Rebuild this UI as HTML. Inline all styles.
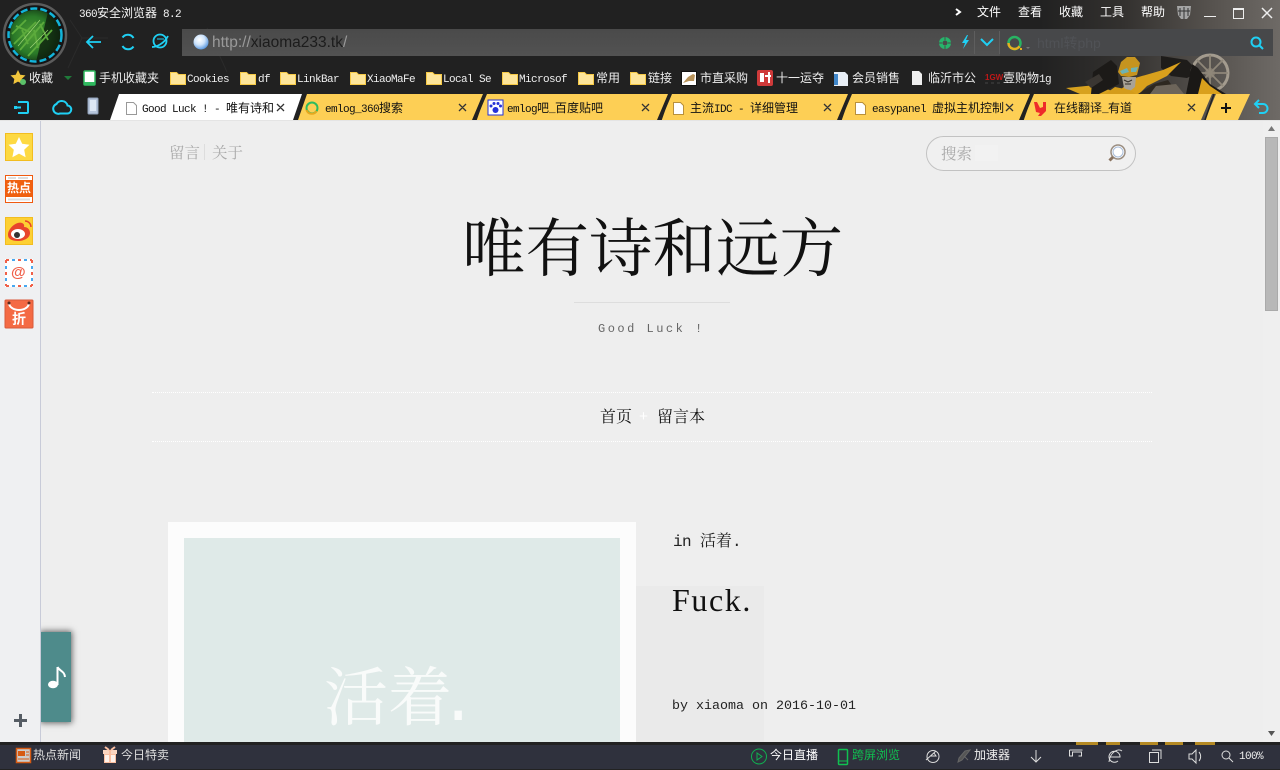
<!DOCTYPE html>
<html lang="zh"><head><meta charset="utf-8"><title>Good Luck</title>
<style>
*{margin:0;padding:0;box-sizing:border-box}
html,body{width:1280px;height:770px;overflow:hidden;background:#eee}
body{position:relative;font-family:"Liberation Mono","Noto Sans CJK SC",sans-serif}
.a{position:absolute}
.t{position:absolute;white-space:nowrap;line-height:1}
.c{font-family:"Noto Sans CJK SC","WenQuanYi Zen Hei",sans-serif;font-size:12px;color:#eee}
.c i,i.l{font:normal 11px "Liberation Mono",monospace;letter-spacing:-.6px}
.k{color:#111}
.s{font-family:"Liberation Mono","Noto Serif CJK SC",serif}
svg{position:absolute;left:0;top:0;display:block}
</style></head><body>

<!-- page content -->
<div class="a" style="left:41px;top:120px;width:1222px;height:622px;background:#eee"></div>
<div class="a" style="left:636px;top:586px;width:128px;height:156px;background:#eaeaea"></div>
<div class="a" style="left:168px;top:522px;width:468px;height:220px;background:#fcfcfc"></div>
<div class="a" style="left:184px;top:538px;width:436px;height:204px;background:#dfeae8"></div>
<div class="t s" style="left:324px;top:672px;font-size:64px;color:#f9fbfa">活着<span style="margin-left:-13px">.</span></div>

<div class="t s" style="left:169px;top:147px;font-size:15.5px;color:#aaa">留言</div>
<div class="a" style="left:204px;top:144px;width:1px;height:16px;background:#ddd"></div>
<div class="t s" style="left:212px;top:147px;font-size:15.5px;color:#aaa">关于</div>
<div class="a" style="left:926px;top:136px;width:210px;height:35px;border:1px solid #c2c2c2;border-radius:18px;background:#f0f0f0"></div>
<div class="a" style="left:975px;top:145px;width:23px;height:16px;background:#f2f2f2"></div>
<div class="t s" style="left:941px;top:148px;font-size:15.5px;color:#aaa">搜索</div>

<div class="t" style="left:462px;top:213px;font-size:63.5px;color:#111;font-family:'Noto Serif CJK SC',serif">唯有诗和远方</div>
<div class="a" style="left:574px;top:302px;width:156px;height:1px;background:#ddd"></div>
<div class="t" style="left:598px;top:323px;font:12px/1 'Liberation Mono',monospace;letter-spacing:2.5px;color:#666">Good Luck !</div>
<div class="a" style="left:152px;top:392px;width:1000px;border-top:1px dotted #fff"></div>
<div class="a" style="left:152px;top:441px;width:1000px;border-top:1px dotted #fff"></div>
<div class="t s" style="left:600px;top:410px;font-size:16px;color:#111">首页</div>
<div class="t" style="left:639px;top:410px;font:15px/1 'Liberation Mono',monospace;color:#fff">+</div>
<div class="t s" style="left:657px;top:410px;font-size:16px;color:#111">留言本</div>

<div class="t" style="left:673px;top:534px;font:16px/1 'Liberation Mono','Noto Serif CJK SC',serif;color:#222;letter-spacing:-.6px">in <span style="letter-spacing:0">活着</span>.</div>
<div class="t" style="left:672px;top:584px;font:32px/1 'Liberation Serif',serif;letter-spacing:1.6px;color:#111">Fuck.</div>
<div class="t" style="left:672px;top:700px;font:13.33px/1 'Liberation Mono',monospace;color:#222">by xiaoma on 2016-10-01</div>

<!-- music tab, then sidebar so the shadow does not spill over it -->
<div class="a" style="left:41px;top:632px;width:30px;height:90px;background:#4e8b8b;box-shadow:0 0 6px 1px rgba(0,0,0,.6)"></div>
<div class="a" style="left:0;top:120px;width:40px;height:622px;background:#eff0f2"></div>
<div class="a" style="left:40px;top:120px;width:1px;height:622px;background:#c8cbd8"></div>

<!-- scrollbar -->
<div class="a" style="left:1263px;top:120px;width:17px;height:622px;background:#efefef"></div>
<div class="a" style="left:1265px;top:137px;width:13px;height:174px;background:#b8b8b8;border:1px solid #aaa"></div>

<svg width="1280" height="770" viewBox="0 0 1280 770" style="z-index:1">
<defs>
<linearGradient id="bg" x1="0" x2="1" y1="0" y2="0"><stop offset="0" stop-color="#212121"/><stop offset=".35" stop-color="#33312f"/><stop offset=".7" stop-color="#55514d"/><stop offset="1" stop-color="#6e6a66"/></linearGradient>
<linearGradient id="addr" x1="0" x2="0" y1="0" y2="1"><stop offset="0" stop-color="#4a4a4a"/><stop offset="1" stop-color="#525252"/></linearGradient>
<radialGradient id="moss" cx=".45" cy=".5" r=".62"><stop offset="0" stop-color="#4f9c34"/><stop offset=".6" stop-color="#2a7a28"/><stop offset="1" stop-color="#0f2c12"/></radialGradient>
<radialGradient id="glb" cx=".4" cy=".35" r=".7"><stop offset="0" stop-color="#fff"/><stop offset=".5" stop-color="#cfe4fb"/><stop offset="1" stop-color="#4d8fdc"/></radialGradient>
<clipPath id="mc"><circle cx="35" cy="35" r="25"/></clipPath>
<clipPath id="bee"><rect x="1040" y="50" width="240" height="44"/></clipPath>
</defs>

<!-- scrollbar arrows -->
<path d="M1268 131l3.500-5 3.500 5z" fill="#777"/>
<path d="M1268 731l3.500 5 3.500-5z" fill="#555"/>

<!-- search magnifier -->
<circle cx="1118" cy="152" r="7" fill="#fff" stroke="#9a8d80" stroke-width="1.500"/>
<circle cx="1118" cy="152" r="5" fill="#fff" stroke="#a8bcd8" stroke-width="1"/>
<path d="M1113 157l-3.500 3.500" stroke="#8a7360" stroke-width="3"/>

<!-- chrome background -->
<rect width="1280" height="120" fill="#212121"/>
<rect x="1040" width="240" height="120" fill="url(#bg)"/>
<path d="M70 20l12 18-14 30M82 38h26M207 28l20 44" stroke="#2b2b2b" fill="none"/>
<rect x="182" y="29" width="1091" height="27" fill="url(#addr)"/>
<rect x="1000" y="29" width="273" height="27" fill="#47484a"/>
<path d="M974.500 31v23M999.500 31v23" stroke="#5e5e5e"/>

<!-- bumblebee -->
<g clip-path="url(#bee)">
<path d="M1066 88l30-3 24 9h-40z" fill="#d8a21e"/>
<path d="M1093 72l18-12 6 6 2 18-20 10h-8z" fill="#1c1a18"/>
<path d="M1085 82l14-8 4 6-12 8z" fill="#3a3632"/>
<path d="M1161 56l26 4 12 12-12 6-16-2-10-8z" fill="#1e1c1a"/>
<path d="M1115 94l20-16 28-8 18-8-14 14-20 10-8 8z" fill="#d9a01c"/>
<path d="M1138 94l16-10 14-4 10 14z" fill="#2e2820"/>
<path d="M1118 72l3-10 6-5 8 0 5 6-3 12-8 2-8-1z" fill="#c6941f"/>
<path d="M1120 71l7-3 2 4-7 2zM1131 68l7-1-2 5-5 0z" fill="#6fb3b3"/>
<path d="M1122 77h14l-1 10-5 4-6-3z" fill="#a8a296"/>
<path d="M1124 80l4 2 4-2M1125 84h6" stroke="#322e28" fill="none"/>
<path d="M1105 94l10-7 15 3 6 4z" fill="#d49c1a"/>
<circle cx="1210" cy="73" r="18" fill="none" stroke="#a39b8e" stroke-width="3"/>
<circle cx="1210" cy="73" r="5" fill="#827a6e"/>
<path d="M1210 55v36M1192 73h36M1197 60l26 26M1223 60l-26 26" stroke="#8f8779" stroke-width="1.800"/>
<path d="M1186 94l6-30 6 4 12 16 16 10z" fill="#1a1816"/>
<path d="M1198 94l4-16 8 8 12 8z" fill="#d9a01c"/>
<path d="M1150 94l6-8 20-2 8 10z" fill="#6d655a"/>
</g>

<!-- logo -->
<circle cx="35" cy="35" r="31" fill="#141414" stroke="#5c5c5c" stroke-width="2.500"/>
<circle cx="35" cy="35" r="25" fill="url(#moss)"/>
<g clip-path="url(#mc)" fill="none">
<path d="M48 12l14 14v36H36z" fill="#0c1a0c" opacity=".75"/>
<path d="M14 44L36 22M20 50L44 22M28 56L52 30M12 34L26 20M34 30l4 18M22 30l6 14M40 24l8 16M16 26l14 6" stroke="#5cab3c" stroke-width="1.800"/>
<path d="M18 46L40 20M30 48L48 30" stroke="#a5d87a" stroke-width=".6"/>
</g>
<circle cx="35" cy="35" r="26.500" fill="none" stroke="#12b4da" stroke-width="2.500" stroke-dasharray="7 3"/>

<!-- nav icons -->
<path d="M101 42H87m6-6l-6 6 6 6" fill="none" stroke="#1fd0f4" stroke-width="1.800"/>
<path d="M133.500 38a6.500 6.500 0 0 0-11-.500M122.500 46a6.500 6.500 0 0 0 11 .500" fill="none" stroke="#1fd0f4" stroke-width="2"/>
<circle cx="160" cy="41" r="6.500" fill="none" stroke="#1fd0f4" stroke-width="1.800"/>
<path d="M152 47c4 0 12-3 16-11" fill="none" stroke="#1fd0f4" stroke-width="1.800"/>
<path d="M157 39h7" stroke="#1fd0f4"/>

<!-- address icons -->
<circle cx="201" cy="42" r="7.500" fill="url(#glb)"/>
<circle cx="945" cy="43" r="6" fill="#26b56b"/>
<circle cx="945" cy="43" r="2.500" fill="#4a4a4a"/>
<path d="M945 37v3M951 43h-3M945 49v-3M939 43h3" stroke="#4a4a4a"/>
<path d="M967 35l-5 8h3l-2 6 6-9h-3l2-5z" fill="#1fd0f4"/>
<path d="M981 39l6 6 6-6" fill="none" stroke="#1fd0f4" stroke-width="2"/>
<circle cx="1014.500" cy="43" r="6" fill="none" stroke="#28b463" stroke-width="2.500"/>
<path d="M1008.500 43a6 6 0 0 0 11 3.300" fill="none" stroke="#e5b020" stroke-width="2.500"/>
<rect x="1020" y="48" width="2" height="2" fill="#e5b020"/>
<path d="M1026 47h4l-2 2z" fill="#777"/>
<circle cx="1256" cy="42" r="4.500" fill="none" stroke="#1fd0f4" stroke-width="2"/>
<path d="M1259 45l4 4" stroke="#1fd0f4" stroke-width="2"/>

<!-- window icons -->
<path d="M956 9l4 3-4 3" fill="none" stroke="#fff" stroke-width="2"/>
<path d="M1177 6h14l-1 9-3 4h-6l-3-4z" fill="#a5a5a5"/>
<path d="M1180 8v8M1184 7v12M1188 8v8M1178 11h12" stroke="#333"/>
<rect x="1204" y="16" width="12" height="1" fill="#eee"/>
<rect x="1233.500" y="9.500" width="10" height="9" fill="none" stroke="#eee"/>
<rect x="1233" y="8" width="11" height="2" fill="#eee"/>
<path d="M1262 8l10 10M1272 8l-10 10" stroke="#eee" stroke-width="1.500"/>

<!-- bookmark icons -->
<path d="M18 70l2.300 4.700 5.200.7-3.800 3.600.9 5.100-4.600-2.500-4.600 2.500.9-5.100-3.800-3.600 5.200-.7z" fill="#f1c53c"/>
<circle cx="23" cy="82" r="3" fill="#5bc26a"/>
<path d="M64 76h8l-4 4z" fill="#1f7a3a"/>
<rect x="84" y="71" width="11" height="14" rx="1" fill="#fff" stroke="#2fba5f" stroke-width="1.500"/>
<rect x="84" y="82" width="11" height="3" fill="#2fba5f"/>
<g fill="#fde59a" stroke="#f6c945">
<path d="M170.500 72.500h6l2 2h7v10h-15z"/><path d="M240.500 72.500h6l2 2h7v10h-15z"/><path d="M280.500 72.500h6l2 2h7v10h-15z"/><path d="M350.500 72.500h6l2 2h7v10h-15z"/><path d="M426.500 72.500h6l2 2h7v10h-15z"/><path d="M502.500 72.500h6l2 2h7v10h-15z"/><path d="M578.500 72.500h6l2 2h7v10h-15z"/><path d="M630.500 72.500h6l2 2h7v10h-15z"/>
</g>
<rect x="681.500" y="71.500" width="15" height="14" fill="#fff" stroke="#111"/>
<path d="M683 83l5-6 5-3 2 1-1 6-5 0z" fill="#b8935a"/>
<rect x="757" y="70" width="16" height="16" rx="2" fill="#cf3a3a"/>
<rect x="760" y="73" width="4" height="9" fill="#fff"/><rect x="765" y="75" width="6" height="2" fill="#fff"/><rect x="768" y="72" width="2" height="11" fill="#fff"/>
<path d="M834 72h11l3 3v11h-14z" fill="#e8eef6"/><rect x="834" y="74" width="4" height="11" fill="#3f86c9"/>
<path d="M912 71h7l3 3v11h-10z" fill="#eee"/>
<path d="M985 83h16" stroke="#333" stroke-width="2" stroke-dasharray="3 3"/>

<!-- tabs -->
<path d="M119 94H302L293 120H110z" fill="#fff"/>
<path d="M307 94H483L472 120H298z" fill="#fdcf55"/>
<path d="M487 94H668L657 120H476z" fill="#fdcf55"/>
<path d="M672 94H848L837 120H661z" fill="#fdcf55"/>
<path d="M852 94H1030L1019 120H841z" fill="#fdcf55"/>
<path d="M1034 94H1212L1201 120H1023z" fill="#fdcf55"/>
<path d="M1216 94H1250L1238 120H1205z" fill="#fdcf55"/>
<g fill="none" stroke="#222" stroke-width="1.500">
<path d="M304 94l-9 26M485 94l-9 26M670 94l-9 26M850 94l-9 26M1032 94l-9 26M1214 94l-9 26"/>
</g>
<rect y="120" x="0" width="1280" height="1" fill="#e4e4e4"/>
<!-- tab left icons -->
<path d="M18 102h9a1 1 0 0 1 1 1v9a1 1 0 0 1-1 1h-9M14 107.500h7" fill="none" stroke="#1fd0f4" stroke-width="2"/>
<rect x="14" y="106" width="3" height="3" fill="#1fd0f4"/>
<path d="M60 113.500h7a4 4 0 0 0 .5-8a6 6 0 0 0-11-1.500a4.700 4.700 0 0 0 3.500 9.500z" fill="none" stroke="#1fd0f4" stroke-width="2"/>
<rect x="88" y="98" width="10" height="16" rx="1" fill="#b7c6dc" stroke="#8fa0b8"/>
<rect x="90" y="100" width="6" height="11" fill="#dde7f4"/>
<path d="M1255 104h8a4.500 4.500 0 0 1 0 9h-4" fill="none" stroke="#1fd0f4" stroke-width="2"/>
<path d="M1259 100l-4 4 4 4" fill="none" stroke="#1fd0f4" stroke-width="2"/>
<!-- tab favicons -->
<path d="M126.500 102.500h7l3 3v9h-10z" fill="#fff" stroke="#999"/>
<circle cx="312" cy="108" r="5.500" fill="none" stroke="#2dbb5f" stroke-width="2"/>
<path d="M306.500 110a5.500 5.500 0 0 0 10 1" fill="none" stroke="#e6a81e" stroke-width="2"/>
<rect x="488" y="100" width="15" height="15" fill="#fff" stroke="#2432d8"/>
<circle cx="495.500" cy="110" r="3" fill="#2432d8"/><circle cx="491" cy="106" r="1.500" fill="#2432d8"/><circle cx="494" cy="103.500" r="1.500" fill="#2432d8"/><circle cx="498" cy="103.500" r="1.500" fill="#2432d8"/><circle cx="500.500" cy="106" r="1.500" fill="#2432d8"/>
<path d="M673.500 102.500h7l3 3v9h-10z M855.500 102.500h7l3 3v9h-10z" fill="#fff" stroke="#b8903c"/>
<path d="M1037 102l3 6 3-1 0-5h3v9l-5 5h-3l2-3-4-1-2-10z" fill="#ee2a2a"/>
<!-- tab closes -->
<path d="M277 104l7 7m0-7l-7 7M459 104l7 7m0-7l-7 7M642 104l7 7m0-7l-7 7M824 104l7 7m0-7l-7 7M1006 104l7 7m0-7l-7 7M1188 104l7 7m0-7l-7 7" stroke="#333" stroke-width="1.300"/>
<path d="M1221 108h10M1226 103v10" stroke="#111" stroke-width="2"/>

<!-- sidebar icons -->
<rect x="5.500" y="133.500" width="27" height="27" fill="#fdd942" stroke="#f2bd20"/>
<path d="M19 137l3.200 6.800 7.300 1-5.300 5 1.400 7.400-6.600-3.600-6.600 3.600 1.400-7.400-5.300-5 7.300-1z" fill="#fff"/>
<rect x="5.500" y="175.500" width="27" height="27" fill="#fff" stroke="#f05a10"/>
<rect x="6" y="180" width="26" height="17" fill="#f0600f"/>
<path d="M8 178h8M18 178h10M8 199.500h22" stroke="#ddd" stroke-width="2"/>
<rect x="5.500" y="217.500" width="27" height="27" fill="#fdd033" stroke="#f2bd20"/>
<path d="M8 235c0-7 9-14 14-12 3 1 2 4 2 4 4 0 6 3 6 6 0 5-6 8-12 8s-10-2-10-6z" fill="#e8452c"/>
<ellipse cx="18" cy="234" rx="7" ry="5" fill="#fff"/><circle cx="17" cy="235" r="3" fill="#333"/>
<path d="M25 221a6 6 0 0 1 6 6" fill="none" stroke="#e8452c" stroke-width="1.500"/>
<rect x="5" y="259" width="28" height="28" fill="#fff"/>
<path d="M6 260h26M6 286h26M6 260v26M32 260v26" fill="none" stroke="#f06048" stroke-width="2" stroke-dasharray="3 9"/>
<path d="M6 260h26M6 286h26M6 260v26M32 260v26" fill="none" stroke="#48a8f0" stroke-width="2" stroke-dasharray="3 9" stroke-dashoffset="6"/>
<rect x="5" y="300" width="28" height="28" rx="1" fill="#f46a44" stroke="#d9593a"/>
<path d="M9 303a10 7 0 0 0 20 0" fill="none" stroke="#fff" stroke-width="2"/>
<circle cx="9" cy="303" r="1.500" fill="#5a2a20"/><circle cx="29" cy="303" r="1.500" fill="#5a2a20"/>
<path d="M14.500 714v13M8 720.500h13" transform="translate(6 0)" stroke="#555c64" stroke-width="3"/>
<!-- music -->
<path d="M57.500 667v18" stroke="#fff" stroke-width="2"/>
<path d="M57.500 667c2 4 7 4 7.500 10" fill="none" stroke="#fff" stroke-width="2"/>
<ellipse cx="53" cy="684.500" rx="5" ry="3.800" fill="#fff"/>

<!-- bottom bar -->
<rect y="742" width="1280" height="28" fill="#2f313d"/>
<rect y="742" width="1280" height="3" fill="#222"/>
<rect y="769" width="1280" height="1" fill="#222"/>
<path d="M1076 742h22v3h-22zM1106 742h14v3h-14zM1140 742h18v3h-18zM1165 742h18v3h-18zM1195 742h20v3h-20z" fill="#b58a24"/>
<rect x="16.500" y="748.500" width="14" height="14" fill="#ccc" stroke="#d65a12" stroke-width="1.500"/>
<rect x="18" y="751" width="7" height="5" fill="#d65a12"/>
<path d="M26 752h3M26 755h3M18 759h11" stroke="#d65a12"/>
<rect x="103" y="750" width="14" height="4" fill="#fcd6c0"/>
<rect x="104.500" y="754.500" width="11" height="8" fill="#fff2ea" stroke="#fcbfa0"/>
<path d="M110 750v12" stroke="#fcbfa0" stroke-width="2"/>
<path d="M105 747l4 3M115 747l-4 3" stroke="#fcbfa0" stroke-width="2"/>
<circle cx="759" cy="756.500" r="7.500" fill="none" stroke="#10b050"/>
<path d="M757 753v7l5-3.500z" fill="none" stroke="#10b050"/>
<rect x="838.500" y="749.500" width="9" height="15" rx="1" fill="none" stroke="#10c050" stroke-width="1.500"/>
<path d="M839 761h8" stroke="#10c050"/>
<g fill="none" stroke="#ddd">
<circle cx="933" cy="756.500" r="6"/>
<path d="M926 760l10-9M931 756h5l-2-3"/>
<path d="M1036 750v12M1031 757l5 5 5-5"/>
<path d="M1069.500 750v6h3v-4h9v4h-3"/>
<path d="M1069.500 750h13"/>
<path d="M1110 757h10a5.500 5.500 0 1 0-2 4M1122 751c-4-3-12 1-13 11"/>
<rect x="1149.500" y="752.500" width="9" height="10"/>
<path d="M1152 750h9v9"/>
<path d="M1189 754h3l4-4v13l-4-4h-3zM1199 752a7 7 0 0 1 0 9"/>
<circle cx="1226" cy="755" r="4"/>
<path d="M1229 758l4 4"/>
</g>
<path d="M958 762l4-2 8-10-5 1-6 7zM964 756l4 4" fill="#555" stroke="#666"/>
</svg>

<!-- chrome text -->
<div style="position:absolute;left:0;top:0;z-index:2;width:1280px;height:770px">
<div class="t c" style="left:79px;top:7px;color:#f4f4f4"><i>360</i>安全浏览器<i> 8.2</i></div>
<div class="t c" style="left:977px;top:6px;color:#fff">文件</div>
<div class="t c" style="left:1018px;top:6px;color:#fff">查看</div>
<div class="t c" style="left:1059px;top:6px;color:#fff">收藏</div>
<div class="t c" style="left:1100px;top:6px;color:#fff">工具</div>
<div class="t c" style="left:1141px;top:6px;color:#fff">帮助</div>

<div class="t" style="left:212px;top:35px;font:15.5px/1 'Liberation Sans',sans-serif;color:#9a9a9a">http://<span style="color:#1c1c1c">xiaoma233.tk</span>/</div>
<div class="t" style="left:1037px;top:36px;font:14px/1 'Liberation Sans','Noto Sans CJK SC',sans-serif;color:#505256">html转php</div>

<div class="t c" style="left:29px;top:72px">收藏</div>
<div class="t c" style="left:99px;top:72px">手机收藏夹</div>
<div class="t c" style="left:187px;top:72px"><i>Cookies</i></div>
<div class="t c" style="left:258px;top:72px"><i>df</i></div>
<div class="t c" style="left:297px;top:72px"><i>LinkBar</i></div>
<div class="t c" style="left:367px;top:72px"><i>XiaoMaFe</i></div>
<div class="t c" style="left:443px;top:72px"><i>Local Se</i></div>
<div class="t c" style="left:519px;top:72px"><i>Microsof</i></div>
<div class="t c" style="left:596px;top:72px">常用</div>
<div class="t c" style="left:648px;top:72px">链接</div>
<div class="t c" style="left:700px;top:72px">市直采购</div>
<div class="t c" style="left:776px;top:72px">十一运夺</div>
<div class="t c" style="left:852px;top:72px">会员销售</div>
<div class="t c" style="left:928px;top:72px">临沂市公</div>
<div class="t" style="left:985px;top:74px;font:bold 8px/1 'Liberation Sans',sans-serif;color:#c01818">1GW</div>
<div class="t c" style="left:1003px;top:72px">壹购物<i>1g</i></div>

<div class="t c k" style="left:142px;top:102px"><i>Good Luck ! - </i>唯有诗和</div>
<div class="t c k" style="left:325px;top:102px"><i>emlog_360</i>搜索</div>
<div class="t c k" style="left:507px;top:102px"><i>emlog</i>吧<i>_</i>百度贴吧</div>
<div class="t c k" style="left:690px;top:102px">主流<i>IDC - </i>详细管理</div>
<div class="t c k" style="left:872px;top:102px"><i>easypanel </i>虚拟主机控制</div>
<div class="t c k" style="left:1054px;top:102px">在线翻译<i>_</i>有道</div>

<div class="t c" style="left:33px;top:749px;color:#ddd">热点新闻</div>
<div class="t c" style="left:121px;top:749px;color:#ddd">今日特卖</div>
<div class="t c" style="left:770px;top:749px;color:#fff">今日直播</div>
<div class="t c" style="left:852px;top:749px;color:#10c050">跨屏浏览</div>
<div class="t c" style="left:974px;top:749px;color:#eee">加速器</div>
<div class="t c" style="left:1239px;top:749px;color:#eee"><i>100%</i></div>

<div class="t" style="left:7px;top:182px;font:bold 12px/1 'Noto Sans CJK SC',sans-serif;color:#fff">热点</div>
<div class="t" style="left:11px;top:265px;font:bold 15px/1 'Liberation Sans',sans-serif;color:#f0604a">@</div>
<div class="t" style="left:12px;top:312px;font:bold 14px/1 'Noto Sans CJK SC',sans-serif;color:#fff">折</div>
</div>
</body></html>
